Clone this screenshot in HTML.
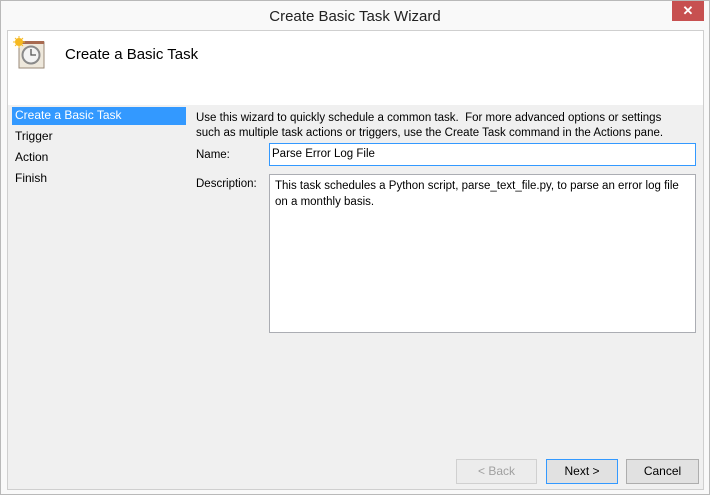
<!DOCTYPE html><html><head><style>
body{margin:0;width:710px;height:495px;overflow:hidden;font-family:"Liberation Sans",sans-serif;font-size:11.5px;color:#000;}
.win{position:absolute;left:0;top:0;width:708px;height:493px;border:1px solid #b9b9b9;background:#f9f9f9;}
.title{position:absolute;left:0;top:7px;width:708px;text-align:center;font-size:15px;color:#222;}
.close{position:absolute;left:671px;top:0;width:32px;height:20px;background:#c75050;color:#fff;text-align:center;font-size:13px;line-height:20px;font-weight:bold;}
.inner{position:absolute;left:6px;top:29px;width:695px;height:458px;border:1px solid #cfcfcf;background:#f0f0f0;}
.hdr{position:absolute;left:0;top:0;width:695px;height:74px;background:#fff;}
.abs{position:absolute;white-space:nowrap;}
.inp{position:absolute;background:#fff;border:1px solid #abadb3;}
.btn{position:absolute;height:23px;border:1px solid #adadad;background:#e1e1e1;text-align:center;line-height:23px;font-size:12px;}
</style></head><body>
<div class="win">
<div class="title">Create Basic Task Wizard</div>
<div class="close">✕</div>
<div class="inner">
<div class="hdr">
<svg class="abs" style="left:5px;top:5px" width="34" height="34" viewBox="0 0 34 34">
<rect x="6" y="6" width="25" height="26" fill="#eee8dc" stroke="#9a8a78"/>
<rect x="6" y="5" width="25" height="3" fill="#a86a50"/>
<circle cx="18" cy="19" r="8.5" fill="#f3f3f3" stroke="#8a8a8a" stroke-width="2"/>
<path d="M18 13v6h5" stroke="#555" fill="none" stroke-width="1.3"/>
<circle cx="6" cy="6" r="4" fill="#f6b921"/>
<path d="M6 0v12M0 6h12M2 2l8 8M10 2l-8 8" stroke="#f6b921" stroke-width="1"/>
</svg>
<div class="abs" style="left:57px;top:15px;font-size:15px;">Create a Basic Task</div>
</div>
<div class="abs" style="left:4px;top:76px;width:174px;height:18px;background:#3399ff;color:#fff;line-height:17px;padding-left:3px;box-sizing:border-box;font-size:12px">Create a Basic Task</div>
<div class="abs" style="left:7px;top:98px;font-size:12px">Trigger</div>
<div class="abs" style="left:7px;top:119px;font-size:12px">Action</div>
<div class="abs" style="left:7px;top:140px;font-size:12px">Finish</div>
<div class="abs" style="left:188px;top:80px;line-height:15px">Use this wizard to quickly schedule a common task.&nbsp; For more advanced options or settings<br>such as multiple task actions or triggers, use the Create Task command in the Actions pane.</div>
<div class="abs" style="left:188px;top:118px">Name:</div>
<div class="inp" style="left:261px;top:112px;width:425px;height:21px;border:1px solid #3399ff;"><span class="abs" style="left:2px;top:4px">Parse Error Log File</span></div>
<div class="abs" style="left:188px;top:147px">Description:</div>
<div class="inp" style="left:261px;top:143px;width:425px;height:157px;"><div class="abs" style="left:5px;top:3px;line-height:16px">This task schedules a Python script, parse_text_file.py, to parse an error log file<br>on a monthly basis.</div></div>
<div class="btn" style="left:448px;top:428px;width:79px;color:#a0a0a0;background:#ececec;border-color:#d0d0d0">&lt; Back</div>
<div class="btn" style="left:538px;top:428px;width:70px;border-color:#3399ff;">Next &gt;</div>
<div class="btn" style="left:618px;top:428px;width:71px;">Cancel</div>
</div></div>
</body></html>
